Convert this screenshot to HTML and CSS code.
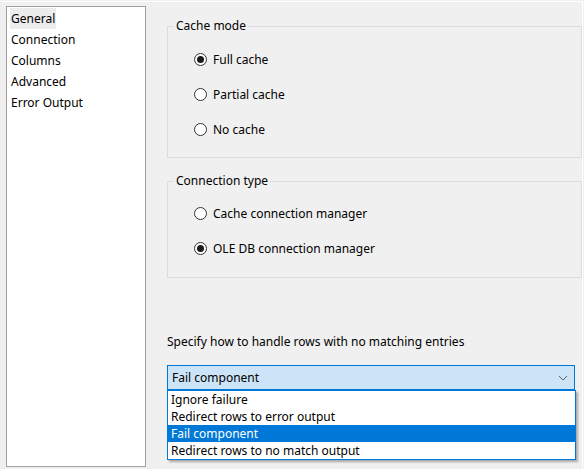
FILE: index.html
```html
<!DOCTYPE html>
<html lang="en">
<head>
    <meta charset="UTF-8">
    <title>Lookup Transformation Editor</title>
    <link rel="stylesheet" href="styles.css">
</head>
<body>
    <div class="window">
        <ul class="nav">
            <li class="nav-item active">General</li>
            <li class="nav-item">Connection</li>
            <li class="nav-item">Columns</li>
            <li class="nav-item">Advanced</li>
            <li class="nav-item">Error Output</li>
        </ul>

        <div class="pane">
            <fieldset class="group cache-group">
                <legend>Cache mode</legend>
                <label class="radio"><span class="dot checked"></span>Full cache</label>
                <label class="radio"><span class="dot"></span>Partial cache</label>
                <label class="radio"><span class="dot"></span>No cache</label>
            </fieldset>

            <fieldset class="group conn-group">
                <legend>Connection type</legend>
                <label class="radio"><span class="dot"></span>Cache connection manager</label>
                <label class="radio"><span class="dot checked"></span>OLE DB connection manager</label>
            </fieldset>

            <p class="hint">Specify how to handle rows with no matching entries</p>

            <div class="combo-wrap">
                <div class="combo">
                    <span>Fail component</span>
                    <svg class="chevron" width="10" height="6" viewBox="0 0 10 6">
                        <polyline points="1,1 5,5 9,1" fill="none" stroke="#606060" stroke-width="1"/>
                    </svg>
                </div>
                <ul class="dropdown">
                    <li>Ignore failure</li>
                    <li>Redirect rows to error output</li>
                    <li class="selected">Fail component</li>
                    <li>Redirect rows to no match output</li>
                </ul>
            </div>
        </div>
    </div>
</body>
</html>
```

FILE: styles.css
```css
:root {
    --bg: #f0f0f0;
    --text: #000;
    --group-border: #dcdcdc;
    --accent: #0078d7;
    --combo-bg: #cce4f7;
}

* {
    margin: 0;
    padding: 0;
    box-sizing: border-box;
}

body {
    background: var(--bg);
    color: var(--text);
    font-family: 'Noto Sans', 'Open Sans', sans-serif;
    font-size: 12px;
    padding: 1px 1px 0 0;
}

.window {
    display: flex;
    align-items: flex-start;
    height: 468px;
    border-top: 1px solid #fff;
    border-right: 1px solid #fff;
}

/* left page list */
.nav {
    list-style: none;
    width: 140px;
    height: 461px;
    margin: 4px 0 0 6px;
    padding: 1px 3px;
    background: #fff;
    border: 1px solid #a0a0a0;
}

.nav-item {
    display: table;
    line-height: 21px;
    padding: 0 1px;
}

.nav-item.active {
    background: #ececec;
}

/* right side */
.pane {
    flex: 1;
    margin-left: 21px;
    padding-top: 16px;
}

.group {
    border: 1px solid var(--group-border);
    padding: 8px 0 10px 6px;
}

.group legend {
    line-height: 16px;
    padding: 0 2px;
}

.conn-group {
    margin-top: 15px;
    padding-top: 7px;
    padding-bottom: 11px;
}

.radio {
    display: flex;
    align-items: center;
    height: 35px;
    padding-left: 20px;
}

.dot {
    width: 13px;
    height: 13px;
    border: 1px solid #333;
    border-radius: 50%;
    background: #fff;
    margin-right: 6px;
    display: flex;
    align-items: center;
    justify-content: center;
}

.dot.checked::after {
    content: "";
    width: 7px;
    height: 7px;
    border-radius: 50%;
    background: #1a1a1a;
}

.hint {
    margin-top: 56px;
    line-height: 16px;
}

.combo-wrap {
    position: relative;
    width: 408px;
    margin-top: 15px;
}

.combo {
    display: flex;
    align-items: center;
    justify-content: space-between;
    height: 25px;
    padding: 0 6px 0 4px;
    background: var(--combo-bg);
    border: 1px solid var(--accent);
}

.chevron {
    display: block;
}

.dropdown {
    position: absolute;
    top: 100%;
    left: 0;
    width: 409px;
    list-style: none;
    background: #fff;
    border: 1px solid var(--accent);
    box-shadow: 2px 2px 2px rgba(0, 0, 0, 0.3);
}

.dropdown li {
    line-height: 17px;
    padding-left: 3px;
}

.dropdown li.selected {
    background: var(--accent);
    color: #fff;
}
```
